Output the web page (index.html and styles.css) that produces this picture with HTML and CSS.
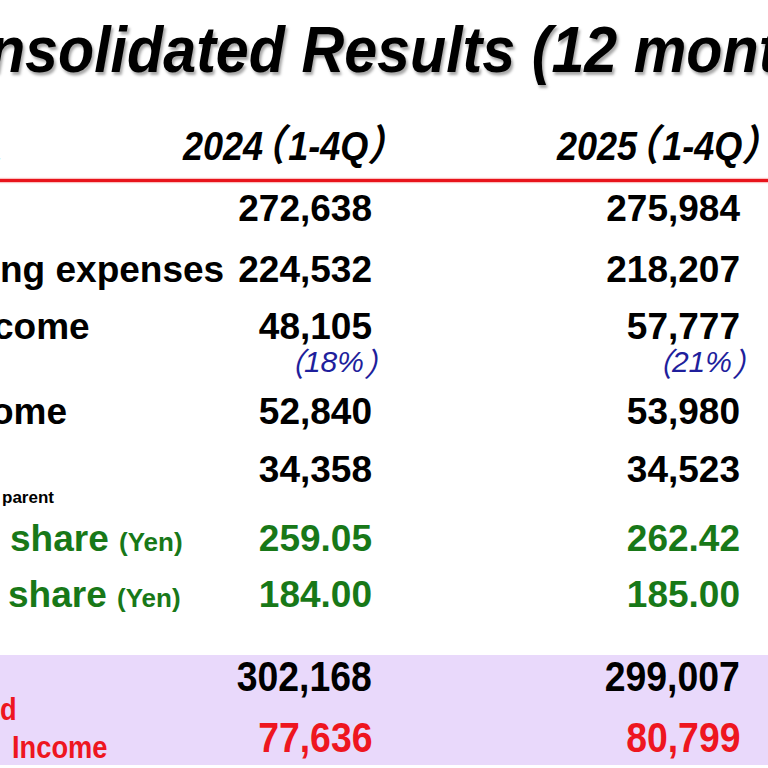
FILE: index.html
```html
<!DOCTYPE html>
<html lang="en">
<head>
<meta charset="utf-8">
<title>Consolidated Results (12 months)</title>
<link rel="stylesheet" href="styles.css">
</head>
<body>
<div class="slide">
  <h1 class="title"><span class="title-text">Consolidated Results (12 months)</span></h1>
  <div class="head">
    <span class="unit">,</span>
    <span class="year">2024<span class="paren po">（</span>1-4Q<span class="paren pc">）</span></span>
    <span class="year">2025<span class="paren po">（</span>1-4Q<span class="paren pc">）</span></span>
  </div>
  <div class="rule"></div>
  <div class="rows">
    <div class="row r1"><span class="label"></span><span class="num">272,638</span><span class="num">275,984</span></div>
    <div class="row r2"><span class="label">ng expenses</span><span class="num">224,532</span><span class="num">218,207</span></div>
    <div class="row r3"><span class="label lab-come">come</span><span class="num">48,105</span><span class="num">57,777</span></div>
    <div class="row pct"><span class="label"></span><span class="num"><span class="paren-fw">（</span>18%<span class="paren-fw">）</span></span><span class="num"><span class="paren-fw">（</span>21%<span class="paren-fw">）</span></span></div>
    <div class="row r4"><span class="label lab-ome">ome</span><span class="num">52,840</span><span class="num">53,980</span></div>
    <div class="row r5"><span class="label"></span><span class="num">34,358</span><span class="num">34,523</span></div>
    <div class="row note"><span class="label">parent</span></div>
    <div class="row r6 green"><span class="label lab-share">share <small>(Yen)</small></span><span class="num">259.05</span><span class="num">262.42</span></div>
    <div class="row r7 green"><span class="label lab-share2">share <small>(Yen)</small></span><span class="num">184.00</span><span class="num">185.00</span></div>
  </div>
  <div class="band">
    <div class="row r8"><span class="label"></span><span class="num"><span class="nar">302,168</span></span><span class="num"><span class="nar">299,007</span></span></div>
    <div class="row r8b red"><span class="label"><span class="nar-l">d</span></span></div>
    <div class="row r9 red"><span class="label lab-inc"><span class="nar-l">Income</span></span><span class="num"><span class="nar">77,636</span></span><span class="num"><span class="nar">80,799</span></span></div>
  </div>
</div>
</body>
</html>
```
FILE: styles.css
```css
html, body {
  margin: 0;
  padding: 0;
  background: #ffffff;
}
body {
  width: 768px;
  height: 768px;
  overflow: hidden;
  font-family: "Liberation Sans", Arial, sans-serif;
  color: #000;
}
.slide {
  width: 768px;
  height: 768px;
  overflow: hidden;
}
.title {
  margin: 0 0 0 -90px;
  padding-top: 17px;
  height: 92px;
  font-size: 64px;
  line-height: 66px;
  font-weight: bold;
  font-style: italic;
  white-space: nowrap;
  box-sizing: border-box;
}
.title-text {
  display: inline-block;
  transform: scaleX(0.925);
  transform-origin: left center;
  text-shadow: 2px 3px 3px rgba(0,0,0,0.35);
}
.head {
  display: grid;
  grid-template-columns: 183px 374px 211px;
  height: 87px;
  box-sizing: border-box;
  padding-bottom: 10px;
  align-items: end;
  font-weight: bold;
  font-style: italic;
  font-size: 40px;
  line-height: 46px;
  white-space: nowrap;
}
.head .year {
  display: inline-block;
  transform: scaleX(0.9);
  transform-origin: left center;
}
.head .unit {
  font-size: 20px;
  line-height: 30px;
  margin-left: -4px;
}
.paren {
  font-family: "Noto Sans CJK JP", sans-serif;
  font-feature-settings: "palt";
  font-size: 42px;
}
.po { margin-left: 1px; margin-right: 6px; }
.pc { margin-left: 1px; }
.paren-fw {
  font-family: "Noto Sans CJK JP", sans-serif;
  font-size: 32px;
}
.rule {
  height: 3px;
  background: #e8141c;
  box-shadow: 0 0 1px 1px rgba(240, 80, 80, 0.35);
}
.rows {
  padding-top: 7px;
}
.row {
  display: grid;
  grid-template-columns: 236px 136px 368px;
  font-weight: bold;
  font-size: 37px;
  line-height: 40px;
  white-space: nowrap;
}
.num {
  display: flex;
  justify-content: flex-end;
}
.label {
  text-align: left;
}
.r1 { height: 61px; }
.r2 { height: 57px; }
.r3 { height: 40px; }
.lab-come { margin-left: -7px; }
.lab-ome { margin-left: -9px; }
.pct {
  height: 45px;
  font-size: 30px;
  line-height: 30px;
  font-weight: normal;
  font-style: italic;
  color: #1f1f9c;
}
.pct .num {
  margin-right: -24px;
}
.r4 { height: 58px; }
.r5 { height: 39px; }
.note {
  height: 30px;
  font-size: 17px;
  line-height: 18px;
}
.note .label { padding-left: 2px; }
.green { color: #187818; }
.r6 { height: 56px; }
.r7 { height: 40px; }
.lab-share { padding-left: 10px; }
.lab-share2 { padding-left: 8px; }
.green small {
  font-size: 26px;
}
.band {
  margin-top: 40px;
  height: 110px;
  background: #e9d9fb;
}
.band .row {
  font-size: 42px;
  line-height: 44px;
}
.nar {
  display: inline-block;
  transform: scaleX(0.89);
  transform-origin: right center;
}
.nar-l {
  display: inline-block;
  transform: scaleX(0.88);
  transform-origin: left center;
}
.r8 { height: 40px; }
.r8b { height: 21px; }
.r8b .label, .r9 .label {
  font-size: 31px;
  line-height: 30px;
}
.red { color: #ee1620; }
.r9 { height: 44px; }
.lab-inc {
  padding-left: 12px;
  align-self: start;
  padding-top: 17px;
}
```
